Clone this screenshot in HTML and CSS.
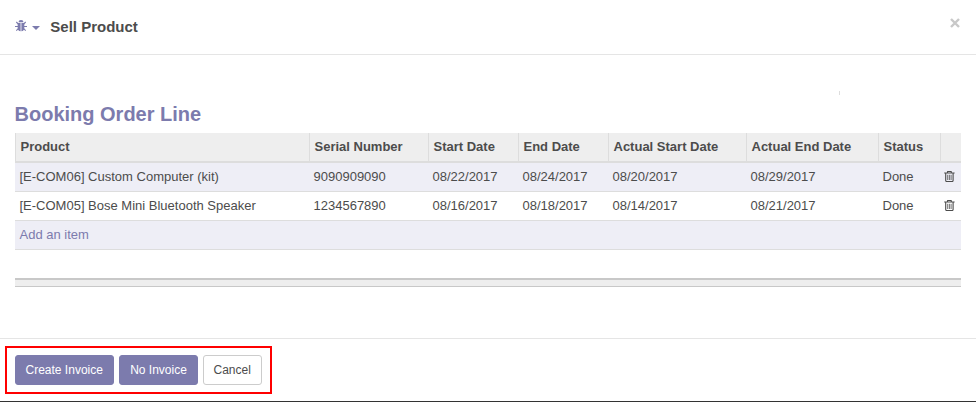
FILE: index.html
```html
<!DOCTYPE html>
<html lang="en">
<head>
<meta charset="utf-8">
<title>Sell Product</title>
<link rel="stylesheet" href="styles.css">
</head>
<body>
<svg class="defs" aria-hidden="true">
  <symbol id="trash" viewBox="0 0 11 11">
    <path d="M3.500 1.500V.9q0-.4.400-.4h3q.4 0 .4.400v.6M.2 2H10.600M1.700 2V9.500q0 1 .9 1h5.600q.9 0 .9-1V2"/>
    <path class="slats" d="M3.700 3.800V9M5.400 3.800V9M7.100 3.800V9"/>
  </symbol>
</svg>
<div class="modal">
  <header class="modal-header">
    <svg class="bug" viewBox="0 0 12 12">
      <path d="M3.500 2.300a2.500 2.300 0 0 1 5 0zM2.700 3.100h2.900V11.200C3.700 11.100 2.700 10 2.700 8.300zM6.400 3.100h2.900v5.200c0 1.700-1 2.800-2.900 2.900z"/>
      <path class="legs" d="M1.300 2l2 2M10.700 2L8.700 4M0 6.500H3M12 6.500H9M1.300 10.700l2-2M10.700 10.700L8.700 8.700"/>
    </svg>
    <span class="caret"></span>
    <h4 class="title">Sell Product</h4>
    <button class="close" aria-label="Close"><svg viewBox="0 0 10 10"><path d="M1 1l8 8M9 1L1 9"/></svg></button>
  </header>
  <main class="modal-body">
    <div class="sep"></div>
    <h2 class="section">Booking Order Line</h2>
    <table class="list">
      <colgroup><col class="c1"><col class="c2"><col class="c3"><col class="c3"><col class="c5"><col class="c6"><col class="c7"><col class="c8"></colgroup>
      <thead>
        <tr><th>Product</th><th>Serial Number</th><th>Start Date</th><th>End Date</th><th>Actual Start Date</th><th>Actual End Date</th><th>Status</th><th></th></tr>
      </thead>
      <tbody>
        <tr><td>[E-COM06] Custom Computer (kit)</td><td>9090909090</td><td>08/22/2017</td><td>08/24/2017</td><td>08/20/2017</td><td>08/29/2017</td><td>Done</td><td><svg class="trash"><use href="#trash"/></svg></td></tr>
        <tr><td>[E-COM05] Bose Mini Bluetooth Speaker</td><td>1234567890</td><td>08/16/2017</td><td>08/18/2017</td><td>08/14/2017</td><td>08/21/2017</td><td>Done</td><td><svg class="trash"><use href="#trash"/></svg></td></tr>
        <tr><td colspan="8" class="add">Add an item</td></tr>
      </tbody>
    </table>
    <div class="foot-bar"></div>
  </main>
  <footer class="modal-footer">
    <div class="highlight">
      <button class="btn primary create">Create Invoice</button>
      <button class="btn primary none">No Invoice</button>
      <button class="btn cancel">Cancel</button>
    </div>
  </footer>
</div>
</body>
</html>
```
FILE: styles.css
```css
* { box-sizing: border-box; }
body {
  margin: 0;
  background: #fff;
  color: #4c4c4c;
  font: 13px/20px "Liberation Sans", Arial, sans-serif;
}
.defs { display: none; }
.modal {
  display: flex;
  flex-direction: column;
  height: 402px;
  border-bottom: 1px solid #333;
}
.modal-header {
  display: flex;
  align-items: center;
  height: 55px;
  padding: 0 16px 0 14.500px;
  border-bottom: 1px solid #e5e5e5;
}
.bug { width: 12px; height: 12px; margin-top: -2px; fill: #7c7bad; }
.legs { fill: none; stroke: #7c7bad; stroke-width: 1.100; }
.caret {
  margin: 1px 0 0 5.500px;
  border: 4px solid transparent;
  border-top-color: #7c7bad;
  border-bottom: 0;
}
.title { margin: 0 0 0 10.300px; font-size: 15px; }
.close {
  width: 10px;
  height: 10px;
  margin: -8px 0 0 auto;
  padding: 0;
  border: 0;
  background: none;
}
.close svg { display: block; width: 10px; height: 10px; }
.close path { stroke: #c8c8c8; stroke-width: 2.400; }
.modal-body { height: 283px; padding: 36px 15px 0; }
.sep { width: 1px; height: 4px; margin-left: 824px; background: #ddd; }
.section {
  margin: 7px 0 0 -0.500px;
  color: #7c7bad;
  font-size: 20px;
  line-height: 24px;
}
.list {
  width: 946px;
  margin-top: 7px;
  table-layout: fixed;
  border-collapse: separate;
  border-spacing: 0;
}
.c1 { width: 294px; }
.c2 { width: 119px; }
.c3 { width: 90px; }
.c5 { width: 138px; }
.c6 { width: 132px; }
.c7 { width: 62px; }
.c8 { width: 21px; }
th {
  height: 30px;
  padding: 0 0 1px 4.500px;
  border-left: 1px solid #ddd;
  border-bottom: 2px solid #ddd;
  background: #eee;
  text-align: left;
  white-space: nowrap;
}
td {
  height: 29px;
  padding: 0 0 1px 4.500px;
  border-bottom: 1px solid #ddd;
  white-space: nowrap;
}
tbody tr:nth-child(odd) { background: #eeeef6; }
td.add { color: #7c7bad; }
td:last-child { padding-left: 4px; }
td.add:last-child { padding-left: 4.500px; }
.trash {
  display: block;
  width: 11px;
  height: 11px;
  fill: none;
  stroke: #4c4c4c;
  stroke-width: 1.100;
}
.slats { stroke-width: 0.800; }
.foot-bar {
  height: 9px;
  margin-top: 28px;
  border-top: 2px solid #c8c8c8;
  border-bottom: 1px solid #c8c8c8;
  background: #eee;
}
.modal-footer {
  flex: 1;
  padding: 7px 5px 0;
  border-top: 1px solid #e5e5e5;
}
.highlight {
  display: flex;
  gap: 5px;
  width: 267px;
  height: 48px;
  padding: 7px 8px;
  border: 2px solid #f00;
}
.btn {
  height: 30px;
  padding: 0 0.600px 0 0;
  border: 1px solid #7c7bad;
  border-radius: 3px;
  font: 12px/18px "Liberation Sans", Arial, sans-serif;
}
.primary { background: #7c7bad; color: #fff; }
.create { width: 99px; }
.none { width: 79px; padding-right: 0; }
.cancel { width: 59px; border-color: #ccc; background: #fff; color: #4c4c4c; }
```
